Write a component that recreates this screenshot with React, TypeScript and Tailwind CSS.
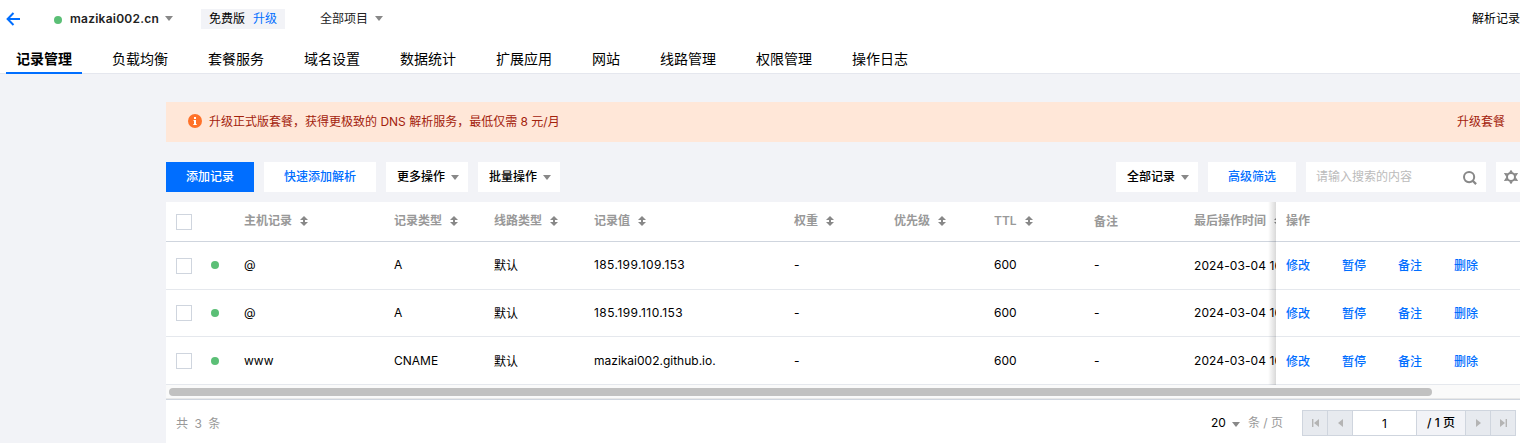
import React from "react";

const tabs = ["记录管理", "负载均衡", "套餐服务", "域名设置", "数据统计", "扩展应用", "网站", "线路管理", "权限管理", "操作日志"];

const records = [
  { host: "@", type: "A", value: "185.199.109.153", spacing: "tracking-[0.4px]", height: "h-12 pb-px", cjk: "pt-px", time: "pt-[2px]", box: "mt-px" },
  { host: "@", type: "A", value: "185.199.110.153", spacing: "tracking-[0.43px]", height: "h-[47px]", cjk: "pt-px", time: "", box: "-mt-px" },
  { host: "www", type: "CNAME", value: "mazikai002.github.io.", spacing: "", height: "h-12 pt-px", cjk: "pt-px", time: "", box: "" },
];

const columns = "grid grid-cols-[35px_33px_150px_100px_100px_200px_100px_100px_100px_100px_100px] items-center";

function Caret({ className = "" }: { className?: string }) {
  return (
    <svg className={`h-[5px] w-2 shrink-0 ${className}`} viewBox="0 0 8 5" fill="#888">
      <path d="M0 0h8L4 5z" />
    </svg>
  );
}

function SortIcon() {
  return (
    <svg className="ml-2 h-[10px] w-2 shrink-0" viewBox="0 0 8 10" fill="#888">
      <path d="M4 0l4 4H5v2h3L4 10 0 6h3V4H0z" />
    </svg>
  );
}

function HeaderCell({ label, sortable = true }: { label: string; sortable?: boolean }) {
  return (
    <div className="flex items-center whitespace-nowrap">
      {label}
      {sortable && <SortIcon />}
    </div>
  );
}

function Checkbox({ className = "" }: { className?: string }) {
  return <span className={`block size-4 border border-[#cfd5de] bg-white ${className}`} />;
}

function MenuButton({ label }: { label: string }) {
  return (
    <button className="flex h-[30px] w-[82px] shrink-0 items-center bg-white pl-[11px] font-medium">
      {label}
      <Caret className="ml-[6px] mt-px" />
    </button>
  );
}

function PageButton({ children }: { children: React.ReactNode }) {
  return (
    <button className="flex w-[25px] items-center justify-center border-l border-[#cfd5de] bg-[#e7eaef]">
      <svg className="h-2 w-[7px]" viewBox="0 0 7 8" fill="#b4b4b4">{children}</svg>
    </button>
  );
}

export default function App() {
  return (
    <div className="flex h-[443px] w-[1520px] flex-col overflow-hidden bg-[#f2f3f7] font-['Inter','Noto_Sans_CJK_SC',sans-serif] text-xs leading-[18px] text-black">
      <header className="flex h-[74px] shrink-0 flex-col border-b border-[#e5e7ee] bg-white">
        <div className="flex h-[38px] items-center">
          <svg className="ml-[6px] h-[14px] w-[15px]" viewBox="0 0 15 14" fill="none" stroke="#006eff" strokeWidth="2">
            <path d="M7.5 1L1.6 7l5.9 6M2 7h12" />
          </svg>
          <span className="ml-[33px] mt-[2px] size-2 rounded-full bg-[#5bbf76]" />
          <span className="ml-2 w-[89px] whitespace-nowrap font-semibold tracking-[0.24px] text-[#222]">mazikai002.cn</span>
          <Caret className="ml-[6px]" />
          <div className="ml-7 flex h-5 w-[84px] items-center bg-[#f2f3f7] pl-2">
            <span>免费版</span>
            <span className="ml-2 text-[#006eff]">升级</span>
          </div>
          <span className="ml-[35px] text-[#222]">全部项目</span>
          <Caret className="ml-[7px]" />
          <span className="ml-auto">解析记录</span>
        </div>
        <nav className="flex h-9 pl-[6px] text-sm leading-[20px]">
          {tabs.map((tab, i) => (
            <div key={tab} className={`mr-5 flex h-9 justify-center px-[10px] pt-3 ${i === 0 ? "relative font-bold" : ""}`}>
              {tab}
              {i === 0 && <span className="absolute inset-x-0 -bottom-px h-[2px] bg-[#006eff]" />}
            </div>
          ))}
        </nav>
      </header>

      <main className="flex flex-1 flex-col pl-[166px] pt-7">
        <div className="flex h-10 shrink-0 items-center bg-[#ffe7d8] pl-[22px] pr-[15px] text-[#a3220c]">
          <svg className="-mt-[2px] size-[14px]" viewBox="0 0 14 14">
            <circle cx="7" cy="7" r="7" fill="#ff7229" />
            <path d="M6 3h2v2H6zM5.5 6H8v4h.7v1H5.3v-1H6V7h-.5z" fill="#fff" />
          </svg>
          <span className="ml-[7px]">升级正式版套餐，获得更极致的 DNS 解析服务，最低仅需 8 元/月</span>
          <span className="ml-auto">升级套餐</span>
        </div>

        <div className="mt-5 flex h-[30px] shrink-0 gap-[10px]">
          <button className="w-22 shrink-0 bg-[#006eff] font-medium text-white">添加记录</button>
          <button className="w-28 shrink-0 bg-white font-medium text-[#006eff]">快速添加解析</button>
          <MenuButton label="更多操作" />
          <MenuButton label="批量操作" />
          <div className="ml-auto flex gap-[10px]">
            <MenuButton label="全部记录" />
            <button className="w-22 shrink-0 bg-white font-medium text-[#006eff]">高级筛选</button>
            <div className="flex w-[180px] shrink-0 items-center justify-between bg-white pl-[10px] pr-[9px] text-[#bbb]">
              请输入搜索的内容
              <svg className="mt-[2px] size-[14px]" viewBox="0 0 14 14" fill="none" stroke="#888" strokeWidth="2">
                <circle cx="6.1" cy="6.1" r="5.1" />
                <path d="M9.2 9.2l3.9 3.9" strokeWidth="2.2" />
              </svg>
            </div>
            <div className="flex w-6 items-center bg-white pl-2">
              <svg className="h-[14px] w-[14px] shrink-0" viewBox="0 0 14 14" fill="none" stroke="#888">
                <circle cx="7" cy="7" r="4" strokeWidth="2" />
                <path d="M5.8 2.5L7 .8l1.2 1.7M5.8 11.5L7 13.2l1.2-1.7M2.5 5.8L1.2 3.8l2.5.2M10.3 4l2.5-.2-1.3 2M2.5 8.2l-1.3 2 2.5-.2M10.3 10l2.5.2-1.3-2" strokeWidth="1.3" />
              </svg>
            </div>
          </div>
        </div>

        <section className="mt-[10px] flex flex-1 flex-col bg-white">
          <div className="flex h-[183px] shrink-0">
            <div className="relative w-[1110px] shrink-0 overflow-hidden">
              <div className={`${columns} h-10 w-[1200px] border-b border-[#cfd5de] pb-px pl-[10px] font-semibold text-[#999]`}>
                <Checkbox className="mt-[2px]" />
                <span />
                <HeaderCell label="主机记录" />
                <HeaderCell label="记录类型" />
                <HeaderCell label="线路类型" />
                <HeaderCell label="记录值" />
                <HeaderCell label="权重" />
                <HeaderCell label="优先级" />
                <HeaderCell label="TTL" />
                <div className="pt-[2px]"><HeaderCell label="备注" sortable={false} /></div>
                <HeaderCell label="最后操作时间" />
              </div>
              {records.map((r, i) => (
                <div key={i} className={`${columns} ${r.height} w-[1200px] border-b border-[#e5e8ed] pl-[10px]`}>
                  <Checkbox className={r.box} />
                  <span className="size-2 rounded-full bg-[#5bbf76]" />
                  <span>{r.host}</span>
                  <span>{r.type}</span>
                  <span className={r.cjk}>默认</span>
                  <span className={r.spacing}>{r.value}</span>
                  <span>-</span>
                  <span />
                  <span>600</span>
                  <span>-</span>
                  <span className={`whitespace-nowrap tracking-[0.1px] ${r.time}`}>2024-03-04 16</span>
                </div>
              ))}
              <div className="absolute inset-y-0 right-0 w-2 bg-linear-to-r from-black/0 to-black/15" />
            </div>
            <div className="flex-1">
              <div className="flex h-10 items-center border-b border-[#cfd5de] pb-px pl-[10px] font-semibold text-[#999]">操作</div>
              {records.map((r, i) => (
                <div key={i} className={`flex ${r.height} items-center gap-8 border-b border-[#e5e8ed] pl-[10px] font-medium text-[#006eff]`}>
                  <span className={r.cjk}>修改</span>
                  <span className={r.cjk}>暂停</span>
                  <span className={r.cjk}>备注</span>
                  <span className={r.cjk}>删除</span>
                </div>
              ))}
            </div>
          </div>
          <div className="h-[14px] shrink-0 border-b border-[#e8e8e8] bg-[#fafafa] pl-[3px] pt-[3px]">
            <div className="h-2 w-[1263px] rounded-full bg-[#c1c1c1]" />
          </div>
          <footer className="flex flex-1 items-start border-t border-[#cfd5de] px-[10px] pt-[10px]">
            <span className="mt-[5px] text-[#999] [word-spacing:3px]">共 3 条</span>
            <div className="ml-auto flex h-[26px] items-center">
              <span>20</span>
              <Caret className="ml-[6px] mt-[3px]" />
              <span className="ml-2 text-[#999]">条 / 页</span>
              <div className="-mr-[6px] ml-[19px] flex h-[26px] border border-l-0 border-[#cfd5de]">
                <PageButton><path d="M0 0h1.4v8H0zM7 0v8L2 4z" /></PageButton>
                <PageButton><path d="M6 0v8L1 4z" /></PageButton>
                <span className="w-16 border-l border-[#cfd5de] bg-white pt-[4px] text-center">1</span>
                <span className="w-[49px] border-l border-[#cfd5de] bg-[#f2f3f7] pt-[3px] text-center font-medium">/ 1 页</span>
                <PageButton><path d="M1 0v8l5-4z" /></PageButton>
                <PageButton><path d="M0 0v8l5-4zM5.6 0H7v8H5.6z" /></PageButton>
              </div>
            </div>
          </footer>
        </section>
      </main>
    </div>
  );
}
